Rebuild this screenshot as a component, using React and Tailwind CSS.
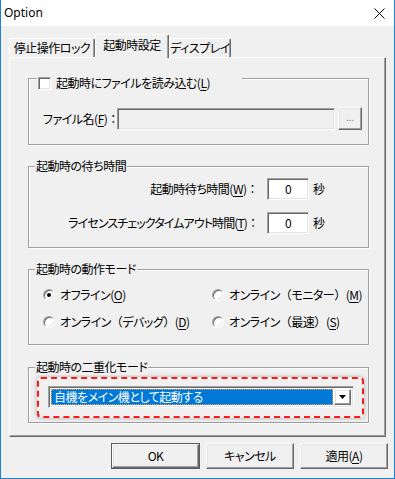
import React from "react";

// 凹んだ枠（入力欄・チェックボックス）
const sunken =
  "border border-t-[#a0a0a0] border-l-[#a0a0a0] border-r-white border-b-white shadow-[inset_1px_1px_0_#696969,inset_-1px_-1px_0_#e3e3e3]";
// 盛り上がった枠（ボタン）
const raised =
  "border border-t-white border-l-white border-r-[#696969] border-b-[#696969] shadow-[inset_-1px_-1px_0_#a0a0a0,inset_1px_1px_0_#e3e3e3]";

function U({ children }) {
  return <span className="underline underline-offset-[2px]">{children}</span>;
}

// 全角記号はそのままの幅で
function W({ children }) {
  return <span className="[font-feature-settings:normal]">{children}</span>;
}

function Group({ title, titleClass, className, children }) {
  return (
    <div
      className={`relative border border-[#a0a0a0] shadow-[inset_1px_1px_0_#fff,1px_1px_0_#fff] ${className}`}
    >
      <div
        className={`absolute bg-[#f0f0f0] h-[16px] leading-[16px] flex items-center ${titleClass}`}
      >
        {title}
      </div>
      {children}
    </div>
  );
}

function Radio({ checked, children }) {
  return (
    <div className="flex items-center h-[16px]">
      <span
        className={`w-[12px] h-[12px] rounded-full bg-white flex items-center justify-center ${sunken}`}
      >
        {checked ? <span className="w-[4px] h-[4px] rounded-full bg-black" /> : null}
      </span>
      <span className="ml-[5px]">{children}</span>
    </div>
  );
}

function Tab({ selected, className, children }) {
  return (
    <div
      className={`flex items-center justify-center bg-[#f0f0f0] rounded-t-[2px] border-t border-l border-white border-r border-r-[#696969] shadow-[inset_-1px_0_0_#a0a0a0] ${
        selected ? "h-[24px] -mb-[1px] relative z-10 pb-[3px]" : "h-[19px]"
      } ${className}`}
    >
      {children}
    </div>
  );
}

export default function App() {
  return (
    <div className="w-[395px] h-[479px] flex flex-col bg-[#f0f0f0] border-x border-b border-[#1883d7] text-[12px] text-black font-['Noto_Sans_CJK_JP','Noto_Sans',sans-serif] [font-feature-settings:'palt'] tracking-[-0.5px] leading-[16px] whitespace-nowrap">
      {/* タイトルバー */}
      <div className="h-[26px] bg-white flex items-center justify-between pl-[3px] pr-[9px]">
        <span className="font-['Noto_Sans',sans-serif] text-[12px] tracking-normal">Option</span>
        <svg width="11" height="11" viewBox="0 0 11 11">
          <path d="M0.5 0.5 L10.5 10.5 M10.5 0.5 L0.5 10.5" stroke="#000" strokeWidth="1" />
        </svg>
      </div>

      {/* タブ */}
      <div className="mt-[8px] h-[23px] flex items-end pl-[8px]">
        <Tab className="w-[86px]">停止操作ロック</Tab>
        <Tab selected className="w-[74px]">起動時設定</Tab>
        <Tab className="w-[62px]">ディスプレイ</Tab>
      </div>

      {/* パネル */}
      <div className="ml-[8px] w-[377px] h-[380px] border-t border-l border-white border-r border-b border-r-[#696969] border-b-[#696969] shadow-[inset_-1px_-1px_0_#a0a0a0] pl-[18px] flex flex-col">
        {/* ファイル読み込み */}
        <Group
          className="mt-[20px] w-[341px] h-[67px]"
          titleClass="left-[8px] -top-[4px] w-[205px]"
          title={
            <>
              <span className={`w-[13px] h-[13px] bg-white ml-[1px] ${sunken}`} />
              <span className="ml-[5px]">
                起動時にファイルを読み込む(<U>L</U>)
              </span>
            </>
          }
        >
          <div className="flex items-center pt-[28px] pl-[14px]">
            <span className="w-[74px]">
              ファイル名(<U>F</U>)<W>：</W>
            </span>
            <div className={`w-[218px] h-[22px] bg-[#f0f0f0] ${sunken}`} />
            <div
              className={`ml-[3px] w-[24px] h-[23px] flex items-center justify-center text-[#8a8a8a] text-[9px] tracking-normal pb-[2px] ${raised}`}
            >
              ...
            </div>
          </div>
        </Group>

        {/* 待ち時間 */}
        <Group
          className="mt-[21px] w-[341px] h-[82px]"
          titleClass="left-[6px] -top-[9px] px-[1px]"
          title="起動時の待ち時間"
        >
          <div className="pt-[11px] flex flex-col gap-[12px]">
            <div className="flex items-center">
              <span className="w-[229px] text-right">
                起動時待ち時間(<U>W</U>)<W>：</W>
              </span>
              <div
                className={`ml-[9px] w-[42px] h-[22px] bg-white flex items-center justify-center ${sunken}`}
              >
                0
              </div>
              <span className="ml-[4px]">秒</span>
            </div>
            <div className="flex items-center">
              <span className="w-[229px] text-right tracking-[-0.9px]">
                ライセンスチェックタイムアウト時間(<U>T</U>)<W>：</W>
              </span>
              <div
                className={`ml-[9px] w-[42px] h-[22px] bg-white flex items-center justify-center ${sunken}`}
              >
                0
              </div>
              <span className="ml-[4px]">秒</span>
            </div>
          </div>
        </Group>

        {/* 動作モード */}
        <Group
          className="mt-[21px] w-[341px] h-[76px]"
          titleClass="left-[6px] -top-[9px] px-[1px]"
          title="起動時の動作モード"
        >
          <div className="pt-[17px] pl-[14px] grid grid-cols-[169px_1fr] gap-y-[11px]">
            <Radio checked>
              オフライン(<U>O</U>)
            </Radio>
            <Radio>
              オンライン<W>（</W>モニター<W>）</W>(<U>M</U>)
            </Radio>
            <Radio>
              オンライン<W>（</W>デバッグ<W>）</W>(<U>D</U>)
            </Radio>
            <Radio>
              オンライン<W>（</W>最速<W>）</W>(<U>S</U>)
            </Radio>
          </div>
        </Group>

        {/* 二重化モード */}
        <Group
          className="mt-[22px] w-[341px] h-[56px]"
          titleClass="left-[6px] -top-[9px] px-[1px]"
          title="起動時の二重化モード"
        >
          <div className="ml-[8px] mt-[9px] w-[327px] h-[41px] border-2 border-dashed border-[#ff1a1a] rounded-[4px] shadow-[0_0_4px_rgba(0,0,0,0.3)] pl-[9px] pt-[7px]">
            <div className={`w-[306px] h-[22px] bg-white flex p-[2px] ${sunken}`}>
              <div className="flex-1 bg-[#0078d7] text-white border border-dotted border-[#e8a040] flex items-center pl-[2px] leading-none">
                自機をメイン機として起動する
              </div>
              <div
                className={`ml-[1px] w-[17px] flex items-center justify-center ${raised}`}
              >
                <svg width="7" height="4" viewBox="0 0 7 4">
                  <path d="M0 0 H7 L3.5 4 Z" fill="#000" />
                </svg>
              </div>
            </div>
          </div>
        </Group>
      </div>

      {/* ボタン */}
      <div className="mt-[6px] flex justify-end gap-[6px] pr-[6px]">
        <div className="w-[89px] h-[26px] border border-[#5a5a5a]">
          <div className={`w-full h-full flex items-center justify-center ${raised}`}>OK</div>
        </div>
        <div className={`w-[88px] h-[26px] flex items-center justify-center ${raised}`}>
          キャンセル
        </div>
        <div className={`w-[88px] h-[26px] flex items-center justify-center ${raised}`}>
          適用(<U>A</U>)
        </div>
      </div>
    </div>
  );
}
